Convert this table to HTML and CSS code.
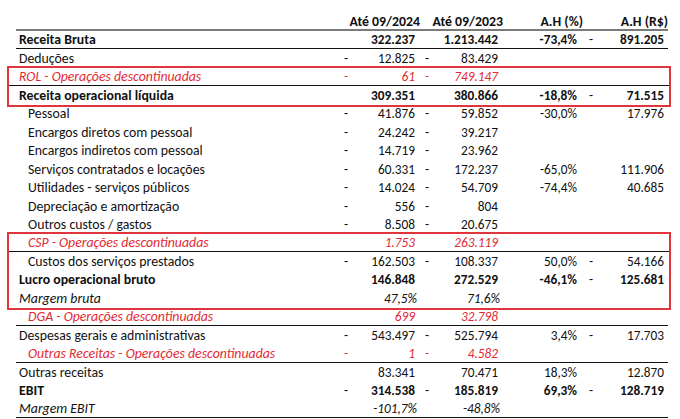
FILE: index.html
```html
<!DOCTYPE html>
<html lang="pt">
<head>
<meta charset="utf-8">
<title>DRE</title>
<link rel="stylesheet" href="styles.css">
</head>
<body>
<div class="sheet">
  <div class="row head">
    <div class="lbl"></div>
    <div class="h h1">Até 09/2024</div>
    <div class="h h2">Até 09/2023</div>
    <div class="h h3">A.H (%)</div>
    <div class="h h4">A.H (R$)</div>
  </div>

  <div class="row bold line">
    <div class="lbl">Receita Bruta</div>
    <div class="num c1"><span></span><span>322.237</span></div>
    <div class="num c2"><span></span><span>1.213.442</span></div>
    <div class="num c3"><span></span><span>-73,4%</span></div>
    <div class="num c4"><span class="sg">-</span><span>891.205</span></div>
  </div>
  <div class="row">
    <div class="lbl">Deduções</div>
    <div class="num c1"><span>-</span><span>12.825</span></div>
    <div class="num c2"><span>-</span><span>83.429</span></div>
    <div class="num c3"></div><div class="num c4"></div>
  </div>

  <div class="group">
    <div class="row red line">
      <div class="lbl">ROL - Operações descontinuadas</div>
      <div class="num c1"><span>-</span><span>61</span></div>
      <div class="num c2"><span>-</span><span>749.147</span></div>
      <div class="num c3"></div><div class="num c4"></div>
    </div>
    <div class="row bold">
      <div class="lbl">Receita operacional líquida</div>
      <div class="num c1"><span></span><span>309.351</span></div>
      <div class="num c2"><span></span><span>380.866</span></div>
      <div class="num c3"><span></span><span>-18,8%</span></div>
      <div class="num c4"><span class="sg">-</span><span>71.515</span></div>
    </div>
  </div>

  <div class="row ind">
    <div class="lbl">Pessoal</div>
    <div class="num c1"><span>-</span><span>41.876</span></div>
    <div class="num c2"><span>-</span><span>59.852</span></div>
    <div class="num c3"><span></span><span>-30,0%</span></div>
    <div class="num c4"><span></span><span>17.976</span></div>
  </div>
  <div class="row ind">
    <div class="lbl">Encargos diretos com pessoal</div>
    <div class="num c1"><span>-</span><span>24.242</span></div>
    <div class="num c2"><span>-</span><span>39.217</span></div>
    <div class="num c3"></div><div class="num c4"></div>
  </div>
  <div class="row ind">
    <div class="lbl">Encargos indiretos com pessoal</div>
    <div class="num c1"><span>-</span><span>14.719</span></div>
    <div class="num c2"><span>-</span><span>23.962</span></div>
    <div class="num c3"></div><div class="num c4"></div>
  </div>
  <div class="row ind">
    <div class="lbl">Serviços contratados e locações</div>
    <div class="num c1"><span>-</span><span>60.331</span></div>
    <div class="num c2"><span>-</span><span>172.237</span></div>
    <div class="num c3"><span></span><span>-65,0%</span></div>
    <div class="num c4"><span></span><span>111.906</span></div>
  </div>
  <div class="row ind">
    <div class="lbl">Utilidades - serviços públicos</div>
    <div class="num c1"><span>-</span><span>14.024</span></div>
    <div class="num c2"><span>-</span><span>54.709</span></div>
    <div class="num c3"><span></span><span>-74,4%</span></div>
    <div class="num c4"><span></span><span>40.685</span></div>
  </div>
  <div class="row ind">
    <div class="lbl">Depreciação e amortização</div>
    <div class="num c1"><span>-</span><span>556</span></div>
    <div class="num c2"><span>-</span><span>804</span></div>
    <div class="num c3"></div><div class="num c4"></div>
  </div>
  <div class="row ind">
    <div class="lbl">Outros custos / gastos</div>
    <div class="num c1"><span>-</span><span>8.508</span></div>
    <div class="num c2"><span>-</span><span>20.675</span></div>
    <div class="num c3"></div><div class="num c4"></div>
  </div>

  <div class="group">
    <div class="row red ind line">
      <div class="lbl">CSP - Operações descontinuadas</div>
      <div class="num c1"><span></span><span>1.753</span></div>
      <div class="num c2"><span></span><span>263.119</span></div>
      <div class="num c3"></div><div class="num c4"></div>
    </div>
    <div class="row ind">
      <div class="lbl">Custos dos serviços prestados</div>
      <div class="num c1"><span>-</span><span>162.503</span></div>
      <div class="num c2"><span>-</span><span>108.337</span></div>
      <div class="num c3"><span></span><span>50,0%</span></div>
      <div class="num c4"><span class="sg">-</span><span>54.166</span></div>
    </div>
    <div class="row bold">
      <div class="lbl">Lucro operacional bruto</div>
      <div class="num c1"><span></span><span>146.848</span></div>
      <div class="num c2"><span></span><span>272.529</span></div>
      <div class="num c3"><span></span><span>-46,1%</span></div>
      <div class="num c4"><span class="sg">-</span><span>125.681</span></div>
    </div>
    <div class="row ital">
      <div class="lbl">Margem bruta</div>
      <div class="num c1 pct"><span></span><span>47,5%</span></div>
      <div class="num c2 pct"><span></span><span>71,6%</span></div>
      <div class="num c3"></div><div class="num c4"></div>
    </div>
  </div>

  <div class="row red ind line">
    <div class="lbl">DGA - Operações descontinuadas</div>
    <div class="num c1"><span></span><span>699</span></div>
    <div class="num c2"><span></span><span>32.798</span></div>
    <div class="num c3"></div><div class="num c4"></div>
  </div>
  <div class="row">
    <div class="lbl">Despesas gerais e administrativas</div>
    <div class="num c1"><span>-</span><span>543.497</span></div>
    <div class="num c2"><span>-</span><span>525.794</span></div>
    <div class="num c3"><span></span><span>3,4%</span></div>
    <div class="num c4"><span class="sg">-</span><span>17.703</span></div>
  </div>
  <div class="row red ind line">
    <div class="lbl">Outras Receitas - Operações descontinuadas</div>
    <div class="num c1"><span>-</span><span>1</span></div>
    <div class="num c2"><span>-</span><span>4.582</span></div>
    <div class="num c3"></div><div class="num c4"></div>
  </div>
  <div class="row">
    <div class="lbl">Outras receitas</div>
    <div class="num c1"><span></span><span>83.341</span></div>
    <div class="num c2"><span></span><span>70.471</span></div>
    <div class="num c3"><span></span><span>18,3%</span></div>
    <div class="num c4"><span></span><span>12.870</span></div>
  </div>
  <div class="row bold">
    <div class="lbl">EBIT</div>
    <div class="num c1"><span class="sg">-</span><span>314.538</span></div>
    <div class="num c2"><span class="sg">-</span><span>185.819</span></div>
    <div class="num c3"><span></span><span>69,3%</span></div>
    <div class="num c4"><span class="sg">-</span><span>128.719</span></div>
  </div>
  <div class="row ital line">
    <div class="lbl">Margem EBIT</div>
    <div class="num c1 pct"><span></span><span>-101,7%</span></div>
    <div class="num c2 pct"><span></span><span>-48,8%</span></div>
    <div class="num c3"></div><div class="num c4"></div>
  </div>
</div>
</body>
</html>
```

FILE: styles.css
```css
html, body {
  margin: 0;
  padding: 0;
  background: #ffffff;
}

body {
  font-family: Carlito, Calibri, Lato, "Open Sans", sans-serif;
  font-size: 13.8px;
  color: #111111;
}

.sheet {
  width: 652px;
  margin-left: 16px;
}

.row {
  display: grid;
  grid-template-columns: 324px 81px 83px 81px 83px;
  height: 18.45px;
  box-sizing: border-box;
  align-items: center;
  line-height: 17px;
  white-space: nowrap;
}

.row.head {
  height: 31px;
  padding-top: 13px;
  border-bottom: 2px solid #7a7a7a;
  font-weight: bold;
}

.h { text-align: right; }
.h1 { padding-right: 1px; }
.h2 { padding-right: 1px; }
.h3 { padding-right: 2px; }
.h4 { padding-right: 0; }

.line { border-bottom: 1px solid #111111; }

.lbl { padding-left: 3px; }
.ind .lbl { padding-left: 12px; }

.bold { font-weight: bold; }
.bold .sg { font-weight: normal; }
.ital { font-style: italic; }
.red { color: #e42a33; font-style: italic; }

.num {
  display: flex;
  justify-content: space-between;
  padding-left: 4px;
  padding-right: 6px;
  font-size: 13.3px;
}
.c3 { padding-right: 8px; }
.c4 { padding-right: 4px; }
.pct { padding-right: 4px; }

.group {
  margin: -2px -3px -2px -9px;
  border: 2px solid #e0353d;
}
.group .row {
  padding: 0 1px 0 7px;
  grid-template-columns: 324px 81px 83px 81px 83px;
  width: 660px;
}
```
